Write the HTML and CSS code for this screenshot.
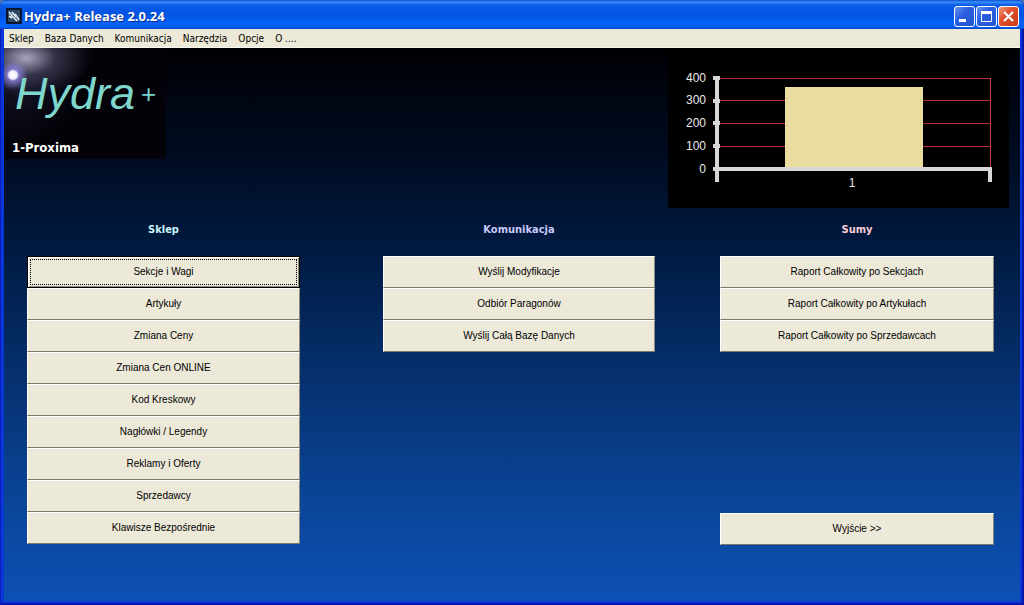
FILE: index.html
```html
<!DOCTYPE html>
<html lang="pl">
<head>
<meta charset="utf-8">
<title>Hydra+ Release 2.0.24</title>
<link rel="stylesheet" href="styles.css">
</head>
<body>
<div class="window">
  <header class="titlebar">
    <svg class="app-icon" width="16" height="16" viewBox="0 0 16 16" aria-hidden="true">
      <rect width="16" height="16" rx="1" fill="#0b1730"/>
      <rect x="1.500" y="1.500" width="13" height="13" fill="#2b4866" stroke="#0a1226"/>
      <path d="M3 4l4 5M6 4l4 5M9 6l4 6M3 8l3 2M7 9l4 4" stroke="#e4eef2" stroke-width="1.600" fill="none"/>
      <path d="M3 7l3-2M8 11l4-3" stroke="#8fb0c4" fill="none"/>
    </svg>
    <h1 class="title">Hydra+ Release 2.0.24</h1>
    <div class="controls">
      <button class="control" type="button" aria-label="Minimalizuj">
        <svg width="19" height="19" viewBox="0 0 19 19"><path d="M4 12h7v3H4z" fill="#fff"/></svg>
      </button>
      <button class="control" type="button" aria-label="Maksymalizuj">
        <svg width="19" height="19" viewBox="0 0 19 19"><path d="M4.500 5v9.500h10V5" fill="none" stroke="#fff"/><path d="M4 4h11v3H4z" fill="#fff"/></svg>
      </button>
      <button class="control control-close" type="button" aria-label="Zamknij">
        <svg width="19" height="19" viewBox="0 0 19 19"><path d="M5 5l9 9M14 5l-9 9" stroke="#fff" stroke-width="2.200"/></svg>
      </button>
    </div>
  </header>
  <nav class="menubar">
    <button class="menu" type="button">Sklep</button>
    <button class="menu" type="button">Baza Danych</button>
    <button class="menu" type="button">Komunikacja</button>
    <button class="menu" type="button">Narzędzia</button>
    <button class="menu" type="button">Opcje</button>
    <button class="menu" type="button">O ....</button>
  </nav>
  <main class="desktop">
    <div class="top">
      <div class="brand">
        <div class="logo"><span class="logo-name">Hydra</span><span class="logo-plus">+</span></div>
        <p class="shop">1-Proxima</p>
      </div>
      <svg class="chart" width="341" height="160" viewBox="0 0 341 160" role="img" aria-label="Wykres sum">
        <g fill="none" stroke="#b52d36" shape-rendering="crispEdges">
          <path d="M49 30.500H323M49 52.500H323M49 75.500H323M49 98.500H323"/>
          <path d="M322.500 30V122" stroke="#c8444c"/>
        </g>
        <rect x="117" y="39" width="138" height="82" fill="#e9dc9f"/>
        <path fill="#d9d6d6" d="M47 29h4v105h-4zM45 28h7v4h-7zM45 51h7v4h-7zM45 73h7v4h-7zM45 96h7v4h-7zM45 119h279v4H45zM320 119h4v15h-4z"/>
        <g class="tick" text-anchor="end">
          <text x="38" y="34">400</text>
          <text x="38" y="56">300</text>
          <text x="38" y="79">200</text>
          <text x="38" y="102">100</text>
          <text x="38" y="125">0</text>
        </g>
        <text class="tick" x="184" y="139" text-anchor="middle">1</text>
      </svg>
    </div>
    <div class="columns">
      <section class="column">
        <h2 class="heading heading-shop">Sklep</h2>
        <div class="stack">
          <button class="action action-default" type="button">Sekcje i Wagi</button>
          <button class="action" type="button">Artykuły</button>
          <button class="action" type="button">Zmiana Ceny</button>
          <button class="action" type="button">Zmiana Cen ONLINE</button>
          <button class="action" type="button">Kod Kreskowy</button>
          <button class="action" type="button">Nagłówki / Legendy</button>
          <button class="action" type="button">Reklamy i Oferty</button>
          <button class="action" type="button">Sprzedawcy</button>
          <button class="action" type="button">Klawisze Bezpośrednie</button>
        </div>
      </section>
      <section class="column column-comm">
        <h2 class="heading heading-comm">Komunikacja</h2>
        <div class="stack">
          <button class="action" type="button">Wyślij Modyfikacje</button>
          <button class="action" type="button">Odbiór Paragonów</button>
          <button class="action" type="button">Wyślij Całą Bazę Danych</button>
        </div>
      </section>
      <section class="column column-sums">
        <h2 class="heading heading-sums">Sumy</h2>
        <div class="stack">
          <button class="action" type="button">Raport Całkowity po Sekcjach</button>
          <button class="action" type="button">Raport Całkowity po Artykułach</button>
          <button class="action" type="button">Raport Całkowity po Sprzedawcach</button>
        </div>
        <button class="action action-exit" type="button">Wyjście &gt;&gt;</button>
      </section>
    </div>
  </main>
</div>
</body>
</html>
```
FILE: styles.css
```css
* {
  box-sizing: border-box;
}

body {
  margin: 0;
  background: #4a72b8;
  font-family: "DejaVu Sans Condensed", "DejaVu Sans", sans-serif;
}

button {
  margin: 0;
  padding: 0;
  border: 0;
  font: inherit;
}

.window {
  display: flex;
  flex-direction: column;
  min-height: 100vh;
  padding: 0 4px 4px;
  border-radius: 7px 7px 0 0;
  background: #0a35d8;
  box-shadow: inset 1px 0 #0a1fc0, inset -2px -2px #0616a8;
  overflow: hidden;
}

.titlebar {
  display: flex;
  align-items: center;
  height: 29px;
  margin: 0 -4px;
  padding: 3px 5px 0 6px;
  background: linear-gradient(#0a4fd0 0, #3a8df8 2px, #0a5ce8 5px, #0353e2 14px, #0563fa 24px, #0360f4 27px, #0244c8 29px);
}

.app-icon {
  flex: none;
}

.title {
  flex: 1;
  margin: 0 0 0 2px;
  color: #fff;
  font: bold 13px/16px "Open Sans", sans-serif;
  text-shadow: 1px 1px #0a2a8a;
}

.controls {
  display: flex;
  gap: 1px;
}

.control {
  display: grid;
  place-items: center;
  width: 21px;
  height: 21px;
  border: 1px solid #fff;
  border-radius: 3px;
  background: linear-gradient(135deg, #6a92f4, #2a5fe0 40%, #2456d0);
}

.control-close {
  background: linear-gradient(135deg, #f09a80, #e0502c 40%, #c83c18);
}

.menubar {
  display: flex;
  gap: 11px;
  height: 19px;
  padding: 0 5px;
  background: #ece9d8;
  border-bottom: 1px solid #f8f6ee;
}

.menu {
  background: none;
  color: #000;
  font-size: 10px;
  line-height: 17px;
}

.desktop {
  flex: 1;
  display: flex;
  flex-direction: column;
  padding-bottom: 56px;
  background: linear-gradient(#000004 0, #000c22 20%, #001a40 36%, #052f6c 58%, #0a4598 82%, #0d50b4 100%);
}

.top {
  display: flex;
  justify-content: space-between;
  align-items: flex-start;
  padding-right: 11px;
}

.brand {
  display: flex;
  flex-direction: column;
  justify-content: space-between;
  width: 162px;
  height: 111px;
  padding: 21px 0 3px 8px;
  background:
    radial-gradient(circle at 9px 27px, #fff 0, #f0eeff 4px, rgba(150, 140, 240, 0.7) 6px, rgba(90, 80, 180, 0) 15px),
    radial-gradient(ellipse 66px 38px at 22px 10px, rgba(185, 180, 205, 0.9), rgba(90, 85, 115, 0.5) 45%, rgba(0, 0, 0, 0)),
    radial-gradient(ellipse 70px 80px at 9px 20px, #16162c, #020208);
}

.logo {
  display: flex;
  align-items: center;
  gap: 6px;
  padding-left: 3px;
  color: #7fd6cc;
  font-family: "Liberation Sans", sans-serif;
  line-height: 50px;
}

.logo-name {
  font-size: 45px;
  font-style: italic;
}

.logo-plus {
  font-size: 26px;
}

.shop {
  margin: 0;
  color: #fff;
  font: bold 13px/16px "DejaVu Sans Condensed", "DejaVu Sans", sans-serif;
}

.chart {
  flex: none;
  background: #000;
}

.tick {
  fill: #e8e8e8;
  font: 12px "Liberation Sans", sans-serif;
}

.columns {
  flex: 1;
  display: grid;
  grid-template-columns: 273fr 83fr 272fr 65fr 274fr;
  padding: 14px 26px 0 23px;
}

.column {
  display: flex;
  flex-direction: column;
}

.column-comm {
  grid-column: 3;
}

.column-sums {
  grid-column: 5;
}

.heading {
  margin: 0 0 18px;
  font: bold 11px/16px "DejaVu Sans Condensed", "DejaVu Sans", sans-serif;
  text-align: center;
}

.heading-shop {
  color: #c8f4fa;
}

.heading-comm {
  color: #c8c8fa;
}

.heading-sums {
  color: #fad0d4;
}

.stack {
  display: flex;
  flex-direction: column;
}

.action {
  height: 32px;
  border: 1px solid;
  border-color: #fff #8a8a7c #77766a #fff;
  background: #ece9d8;
  color: #000;
  font: 10px/16px "Liberation Sans", sans-serif;
}

.action-default {
  border: 1px solid #000;
  box-shadow: inset 1px 1px #fff, inset -1px -1px #8a8a7c;
  outline: 1px dotted #000;
  outline-offset: -4px;
}

.action-exit {
  margin-top: auto;
}
```
